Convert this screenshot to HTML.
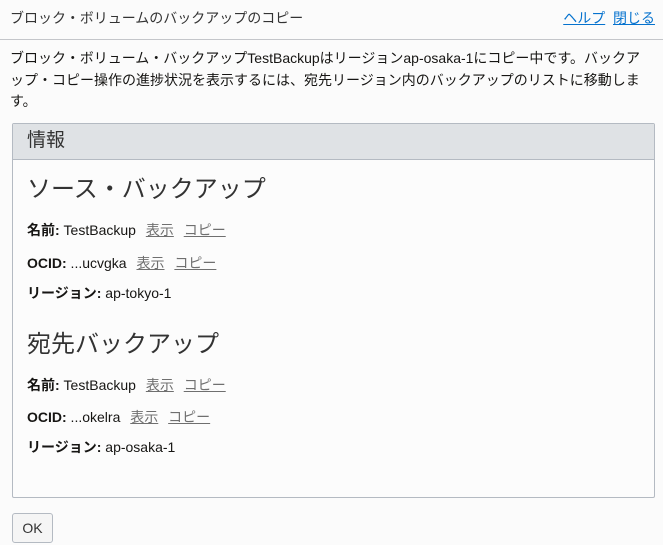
<!DOCTYPE html>
<html><head><meta charset="utf-8"><style>
body{margin:0;width:663px;height:545px;background:#fbfbfb;font-family:"Liberation Sans","Noto Sans CJK JP",sans-serif;color:#161513;overflow:hidden;position:relative}
.a{position:absolute;white-space:nowrap}
.hd{position:absolute;left:0;top:0;width:663px;height:39px;border-bottom:1px solid #c4c6ca}
a{color:#0572ce;text-decoration:underline}
.l{color:#6f6f6f;text-decoration:underline;margin-left:6px}
.panel{position:absolute;left:12px;top:123px;width:641px;height:373px;border:1px solid #b4bac2;border-radius:2px;background:#fcfcfc}
.ph{height:35px;background:#dfe2e5;border-bottom:1px solid #b4bac2;font-size:19px;color:#333;line-height:34px;padding-left:14px}
.h{font-size:24px;color:#333}
.r{font-size:14px}
b{font-weight:bold}
</style></head><body>
<div class="hd"></div>
<div class="a" style="left:10px;top:8px;font-size:14px;color:#333">ブロック・ボリュームのバックアップのコピー</div>
<div class="a" style="right:8px;top:8px;font-size:14px"><a>ヘルプ</a>&nbsp; <a>閉じる</a></div>
<div class="a" style="left:10px;top:48px;font-size:14px;line-height:21.5px">ブロック・ボリューム・バックアップTestBackupはリージョンap-osaka-1にコピー中です。バックア<br>ップ・コピー操作の進捗状況を表示するには、宛先リージョン内のバックアップのリストに移動しま<br>す。</div>
<div class="panel"><div class="ph">情報</div></div>
<div class="a h" style="left:27px;top:169px">ソース・バックアップ</div>
<div class="a r" style="left:27px;top:220px"><b>名前:</b> TestBackup <span class="l">表示</span> <span class="l">コピー</span></div>
<div class="a r" style="left:27px;top:253px"><b>OCID:</b> ...ucvgka <span class="l">表示</span> <span class="l">コピー</span></div>
<div class="a r" style="left:27px;top:283px"><b>リージョン:</b> ap-tokyo-1</div>
<div class="a h" style="left:27px;top:324px">宛先バックアップ</div>
<div class="a r" style="left:27px;top:375px"><b>名前:</b> TestBackup <span class="l">表示</span> <span class="l">コピー</span></div>
<div class="a r" style="left:27px;top:407px"><b>OCID:</b> ...okelra <span class="l">表示</span> <span class="l">コピー</span></div>
<div class="a r" style="left:27px;top:437px"><b>リージョン:</b> ap-osaka-1</div>
<div class="a" style="left:12px;top:513px;width:39px;height:28px;border:1px solid #b4bac2;border-radius:3px;background:#f5f5f5;font-size:14px;line-height:28px;text-align:center;color:#333">OK</div>
</body></html>
